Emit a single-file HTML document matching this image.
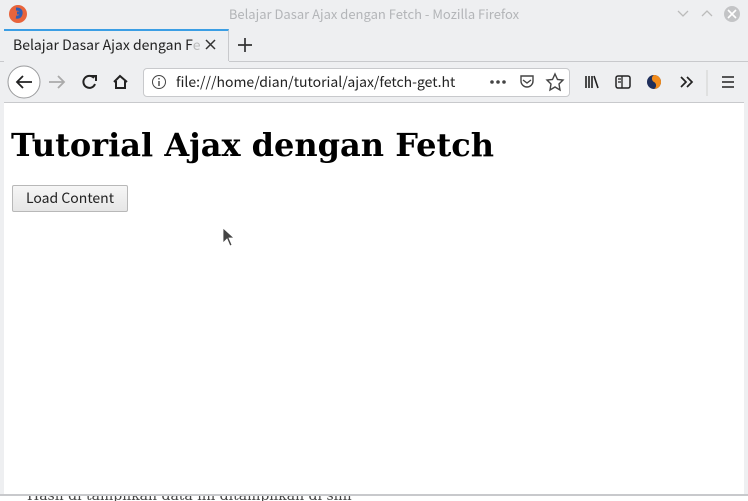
<!DOCTYPE html>
<html><head><meta charset="utf-8"><style>
*{margin:0;padding:0;box-sizing:border-box}
body{width:748px;height:501px;background:#eeeff1;position:relative;overflow:hidden;font-family:"Noto Sans CJK JP","Liberation Sans",sans-serif}
.abs{position:absolute}
.title{left:0;right:0;top:4px;text-align:center;font-size:13px;color:#b3b5b8}
.tab{left:4px;top:29px;width:225px;height:33px;background:#eeeff1;border-top:2px solid #3b9ee4;border-right:1px solid #c8c9cc}
.tabtxt{left:13px;top:35px;font-size:14px;color:#222;width:187px;white-space:nowrap;overflow:hidden}
.url{left:143px;top:68px;width:427px;height:29px;background:#fff;border:1px solid #c8c9cc;border-radius:4px}
.content{left:4px;top:102px;width:740px;height:392px;background:#fff;border-top:1px solid #c8c9cc}
h1{position:absolute;left:11px;top:126px;font-family:"DejaVu Serif","Liberation Serif",serif;font-size:32px;font-weight:bold;color:#000;white-space:nowrap}
.btn{left:12px;top:185px;width:116px;height:27px;border:1px solid #b8b8b8;border-radius:2px;background:linear-gradient(#f6f6f6,#e6e6e6);font-size:14px;color:#222;text-align:center;line-height:24px}
</style></head><body>
<svg class="abs" style="left:8px;top:4px" width="20" height="20"><circle cx="10" cy="10" r="9" fill="#e8643c"/><path d="M8 5 Q14 5 13 10 Q12 14 8 13 M9 9 L13 9" stroke="#2f5fb5" stroke-width="3" fill="none"/></svg>
<div class="abs title">Belajar Dasar Ajax dengan Fetch - Mozilla Firefox</div>
<svg class="abs" style="left:675px;top:6px" width="70" height="16"><path d="M3 5 L8 10 L13 5" stroke="#bbb" fill="none" stroke-width="1.3"/><path d="M27 10 L32 5 L37 10" stroke="#bbb" fill="none" stroke-width="1.3"/><circle cx="57" cy="8" r="8" fill="#c3c4c6"/><path d="M53 4 L61 12 M61 4 L53 12" stroke="#fff" stroke-width="1.6"/></svg>
<div class="abs tab"></div>
<div class="abs tabtxt">Belajar Dasar Ajax dengan F<span style="color:#bbb">e</span></div>
<svg class="abs" style="left:204px;top:38px" width="14" height="14"><path d="M2 2 L11 11 M11 2 L2 11" stroke="#333" stroke-width="1.5"/></svg>
<svg class="abs" style="left:236px;top:36px" width="18" height="18"><path d="M9 2 V16 M2 9 H16" stroke="#333" stroke-width="1.7"/></svg>
<div class="abs" style="left:0;top:61px;width:748px;height:1px;background:#c8c9cc"></div>
<div class="abs" style="left:4px;top:61px;width:225px;height:1px;background:#eeeff1"></div>
<svg class="abs" style="left:6px;top:64px" width="134" height="36"><circle cx="18" cy="18" r="16" fill="#fff" stroke="#9a9b9d"/><path d="M11 18 H26 M17 12 L11 18 L17 24" stroke="#222" stroke-width="1.8" fill="none"/><path d="M43 18 H58 M52 12 L58 18 L52 24" stroke="#aaa" stroke-width="1.8" fill="none"/><path d="M88 14 A6 6 0 1 0 89 20" stroke="#222" stroke-width="2" fill="none"/><path d="M85 12 L90 12 L90 17" stroke="#222" stroke-width="2" fill="none"/><path d="M108 18 L114 12 L121 18 M110 17 V24 H119 V17" stroke="#222" stroke-width="2" fill="none"/></svg>
<div class="abs url"></div>
<svg class="abs" style="left:151px;top:74px" width="16" height="16"><circle cx="8" cy="8" r="6.5" stroke="#444" fill="none"/><path d="M8 7 V12 M8 4 V5.5" stroke="#444" stroke-width="1.4"/></svg>
<div class="abs" style="left:176px;top:72px;font-size:14px;color:#222;white-space:nowrap;width:280px;overflow:hidden">file:///home/dian/tutorial/ajax/fetch-get.ht<span style="color:#999">m</span></div>
<svg class="abs" style="left:488px;top:70px" width="250" height="26"><circle cx="4" cy="12" r="1.8" fill="#444"/><circle cx="10" cy="12" r="1.8" fill="#444"/><circle cx="16" cy="12" r="1.8" fill="#444"/><path d="M33 6 H45 V11 A6 6 0 0 1 33 11 Z M35 10 L39 13 L43 10" stroke="#444" stroke-width="1.4" fill="none"/><path d="M67 4 L69.5 9.5 L75 10 L71 14 L72 20 L67 17 L62 20 L63 14 L59 10 L64.5 9.5 Z" stroke="#444" stroke-width="1.4" fill="none"/><path d="M98 6 V18 M101 6 V18 M104 6 V18 M106 6 L110 18" stroke="#222" stroke-width="1.6"/><rect x="128" y="6" width="14" height="12" rx="2" stroke="#222" stroke-width="1.5" fill="none"/><path d="M134 6 V18 M130 9 H133 M130 12 H133" stroke="#222" stroke-width="1.3"/><circle cx="166" cy="12" r="7" fill="#1f2f5c"/><path d="M166 5 A7 7 0 0 1 166 19 A4 4 0 0 0 166 12 A4 4 0 0 1 166 5" fill="#f28c1c"/><path d="M193 7 L198 12 L193 17 M199 7 L204 12 L199 17" stroke="#222" stroke-width="1.7" fill="none"/><path d="M219 0 V26" stroke="#d0d0d0"/><path d="M234 7 H246 M234 12 H246 M234 17 H246" stroke="#222" stroke-width="1.6"/></svg>
<div class="abs content"></div>
<h1>Tutorial Ajax dengan Fetch</h1>
<div class="abs btn">Load Content</div>
<svg class="abs" style="left:222px;top:227px" width="14" height="22"><path d="M1 1 L1 16 L5 12 L8 19 L10 18 L7 11 L12 11 Z" fill="#444" stroke="#fff" stroke-width="0.8"/></svg>
<div class="abs" style="left:0;top:496px;width:748px;height:5px;background:#fff;overflow:hidden"><div style="position:absolute;left:27px;top:-8px;font-family:'DejaVu Serif',serif;font-size:14px;color:#444;white-space:nowrap">Hasil di tampilkan data ini ditampilkan di sini</div></div>
<div class="abs" style="left:0;top:494px;width:748px;height:2px;background:#c8c9cc"></div>
</body></html>
